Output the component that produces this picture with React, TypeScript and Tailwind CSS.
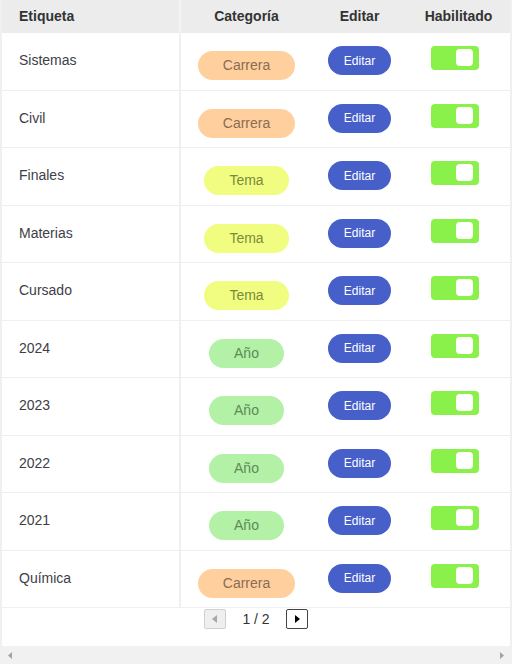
import React from "react";

type Kind = "Carrera" | "Tema" | "Año";

interface Row {
  label: string;
  category: Kind;
}

const rows: Row[] = [
  { label: "Sistemas", category: "Carrera" },
  { label: "Civil", category: "Carrera" },
  { label: "Finales", category: "Tema" },
  { label: "Materias", category: "Tema" },
  { label: "Cursado", category: "Tema" },
  { label: "2024", category: "Año" },
  { label: "2023", category: "Año" },
  { label: "2022", category: "Año" },
  { label: "2021", category: "Año" },
  { label: "Química", category: "Carrera" },
];

const pillStyles: Record<Kind, string> = {
  Carrera: "bg-[#ffd09e] text-[#8a6c52]",
  Tema: "bg-[#f0fd80] text-[#7c8a3c]",
  Año: "bg-[#b2f1a6] text-[#5c8a58]",
};

function Toggle() {
  return (
    <div className="flex h-6 w-12 items-start justify-end rounded-[4px] bg-[#8af04a] pr-[6px] pt-[3px]">
      <div className="h-[17px] w-[17px] rounded-[4px] bg-white" />
    </div>
  );
}

function Triangle({ dir, color }: { dir: "left" | "right"; color: string }) {
  return (
    <svg width="5" height="8" viewBox="0 0 5 8">
      {dir === "right" ? (
        <path d="M0 0 L5 4 L0 8 Z" fill={color} />
      ) : (
        <path d="M5 0 L0 4 L5 8 Z" fill={color} />
      )}
    </svg>
  );
}

export default function App() {
  return (
    <div className="flex h-[664px] w-[512px] flex-col bg-white font-['Liberation_Sans',Arial,sans-serif] text-[14px]">
      <div className="flex-1 border-x-2 border-[#f0f0f0]">
        {/* Header */}
        <div className="flex h-[33px] bg-[#ececec] font-bold text-[#333]">
          <div className="flex w-[179px] items-center border-r-2 border-[#f4f4f4] pl-[17px]">
            Etiqueta
          </div>
          <div className="flex w-[131px] items-center justify-center">
            Categoría
          </div>
          <div className="flex w-[95px] items-center justify-center">
            Editar
          </div>
          <div className="flex flex-1 items-center justify-center">
            Habilitado
          </div>
        </div>

        {/* Body */}
        {rows.map((row) => (
          <div
            key={row.label}
            className="flex h-[57.5px] border-b border-[#efefef] text-[#3e3e48]"
          >
            <div className="w-[179px] border-r-2 border-[#f0f0f0] pl-[17px] pt-[17px] leading-5">
              {row.label}
            </div>
            <div className="flex w-[131px] justify-center pt-[18px]">
              <span
                className={`flex h-[29px] items-center rounded-full px-[25px] ${pillStyles[row.category]}`}
              >
                {row.category}
              </span>
            </div>
            <div className="flex w-[95px] justify-center pt-[13px]">
              <button className="h-[29px] rounded-full bg-[#475fc9] px-4 text-[12px] text-white">
                Editar
              </button>
            </div>
            <div className="flex flex-1 justify-center pr-[7px] pt-[13px]">
              <Toggle />
            </div>
          </div>
        ))}

        {/* Pagination */}
        <div className="flex items-center justify-center gap-[16.5px] pt-px text-[#333]">
          <button className="flex h-5 w-[22px] items-center justify-center rounded-[2px] border border-[#d0d0d0] bg-[#efefef]">
            <Triangle dir="left" color="#a8a8a8" />
          </button>
          <span className="leading-5">1 / 2</span>
          <button className="flex h-5 w-[22px] items-center justify-center rounded-[2px] border border-[#444] bg-white">
            <Triangle dir="right" color="#000" />
          </button>
        </div>
      </div>

      {/* Horizontal scrollbar */}
      <div className="flex h-[18px] items-center justify-between bg-[#f1f1f1] px-2">
        <svg width="4" height="7" viewBox="0 0 4 7">
          <path d="M4 0 L0 3.5 L4 7 Z" fill="#a3a3a3" />
        </svg>
        <svg width="4" height="7" viewBox="0 0 4 7">
          <path d="M0 0 L4 3.5 L0 7 Z" fill="#a3a3a3" />
        </svg>
      </div>
    </div>
  );
}
